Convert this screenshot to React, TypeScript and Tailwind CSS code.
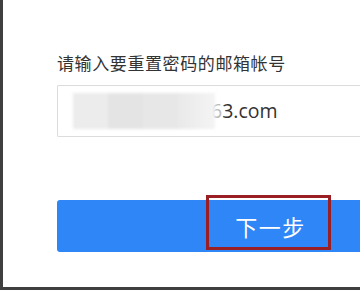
import React from 'react';

const cjk = { fontFamily: '"Noto Sans CJK SC", "Noto Sans", sans-serif' };

const BlurredName: React.FC = () => (
    <div className="flex h-[36px] w-[142px] shrink-0 blur-[1.5px]">
        <div className="w-[35px] bg-[#ececec]" />
        <div className="w-[35px] bg-[#e4e4e4]" />
        <div className="w-[35px] bg-[#e7e7e7]" />
        <div className="w-[37px] bg-gradient-to-r from-[#e9e9e9] to-[#f4f4f4]" />
    </div>
);

const App: React.FC = () => {
    return (
        <div className="w-[360px] h-[290px] overflow-hidden bg-white border-l-[3px] border-b-[3px] border-[#3f3f3f]">
            <div className="pl-[54px] pt-[51px] flex flex-col" style={cjk}>
                <label className="text-[17px] leading-[24px] text-[#333] tracking-[0.6px]">
                    请输入要重置密码的邮箱帐号
                </label>
                {/* input runs off the right edge of the window */}
                <div className="mt-[10px] h-[52px] border border-r-0 border-[#dcdcdc] rounded-l-[2px] flex items-center pl-[15px]">
                    <BlurredName />
                    <span
                        className="-ml-[4px] text-[19.5px] text-[#333]"
                        style={{ fontFamily: '"Open Sans", "Noto Sans", sans-serif' }}
                    >
                        <span className="text-[#bbb]">6</span>3.com
                    </span>
                </div>
                <div className="relative mt-[63px]">
                    <button className="w-full h-[52px] pl-[124px] rounded-l-[3px] bg-[#2f86f7] text-white text-[22px] tracking-[1.5px]">
                        下一步
                    </button>
                    <div className="absolute left-[149px] -top-[5px] w-[125px] h-[55px] border-[3px] border-[#9a1f25] pointer-events-none" />
                </div>
            </div>
        </div>
    );
};

export default App;
